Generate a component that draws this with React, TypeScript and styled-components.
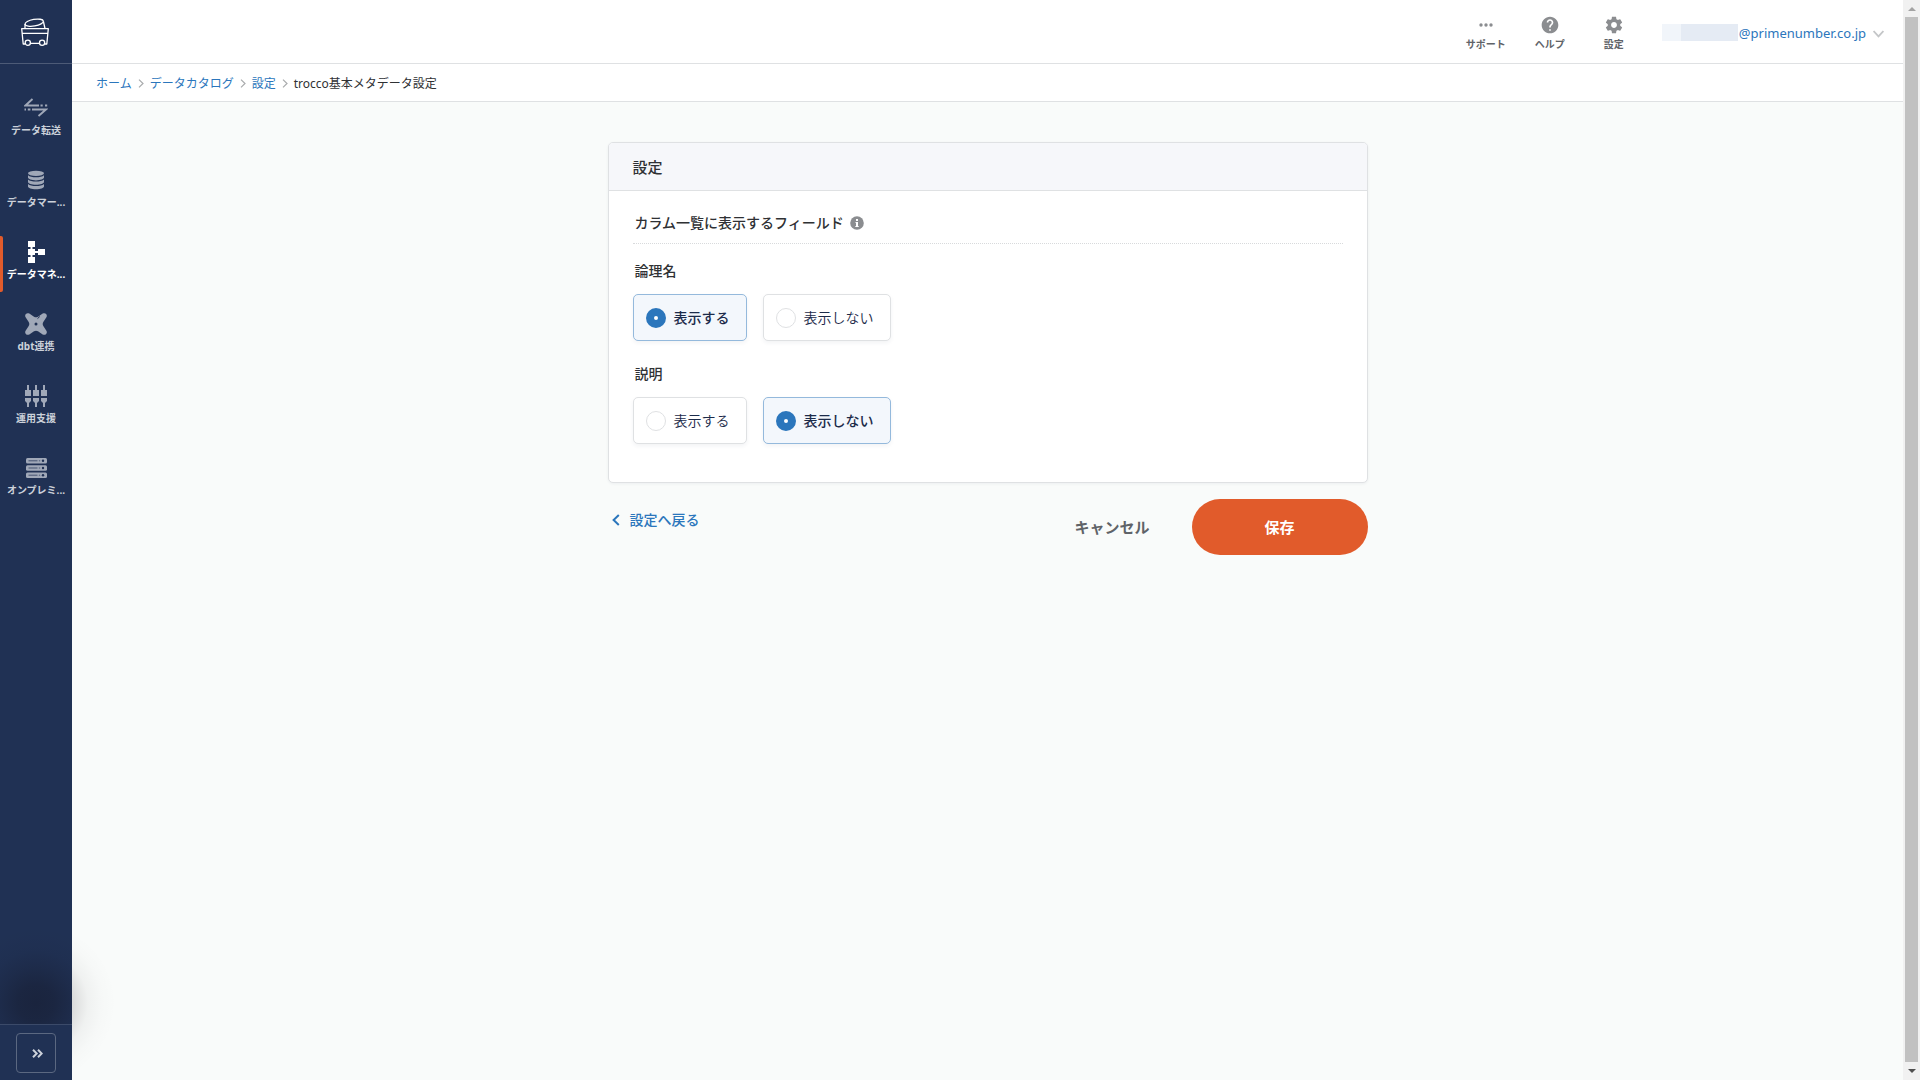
import React, { useState } from 'react';
import styled, { createGlobalStyle } from 'styled-components';

const color = {
  navy: '#203154',
  navyLine: '#4d5b77',
  blue: '#2b76bc',
  orange: '#e15b2b',
  text: '#2f3134',
  muted: '#5f6368',
  icon: '#8b8d90',
  line: '#dfe1e3',
  page: '#f9fbfa',
};

const GlobalStyle = createGlobalStyle`
  *, *::before, *::after { box-sizing: border-box; }
  html, body { margin: 0; }
  body {
    color: ${color.text};
    background: ${color.page};
    font-family: "Noto Sans", "Noto Sans CJK JP", sans-serif;
    font-size: 14px;
    line-height: 20px;
    overflow: hidden;
  }
  button, input { font: inherit; }
  a { text-decoration: none; }
`;

const Shell = styled.div`
  display: grid;
  grid-template-columns: 72px minmax(0, 1fr) 17px;
  height: 100vh;
`;

/* Sidebar */

const Sidebar = styled.aside`
  position: relative;
  display: flex;
  flex-direction: column;
  background: ${color.navy};
`;

const LogoLink = styled.a`
  display: flex;
  align-items: center;
  justify-content: center;
  height: 64px;
  padding-right: 2px;
  border-bottom: 1px solid ${color.navyLine};
`;

const Nav = styled.nav`
  flex: 1;
  display: flex;
  flex-direction: column;
  gap: 16px;
  padding-top: 28px;
`;

const NavItem = styled.a<{ $active?: boolean }>`
  position: relative;
  display: flex;
  flex-direction: column;
  align-items: center;
  height: 56px;
  padding-top: 4px;
  color: ${(p) => (p.$active ? '#fff' : '#a0a8b8')};

  &::before {
    content: '';
    display: ${(p) => (p.$active ? 'block' : 'none')};
    position: absolute;
    left: 0;
    top: 0;
    width: 3px;
    height: 100%;
    border-radius: 0 2px 2px 0;
    background: ${color.orange};
  }
`;

const NavIcon = styled.span`
  display: flex;
  align-items: center;
  justify-content: center;
  height: 24px;
`;

const NavLabel = styled.span<{ $active?: boolean }>`
  padding-top: 2px;
  font-size: 10px;
  line-height: 16px;
  font-weight: 700;
  white-space: nowrap;
  color: ${(p) => (p.$active ? '#fff' : '#ccd1da')};
`;

const Glow = styled.div`
  position: absolute;
  left: -44px;
  bottom: -3px;
  width: 160px;
  height: 160px;
  background: radial-gradient(
    circle closest-side,
    rgba(12, 6, 10, 0.3) 0,
    rgba(12, 6, 10, 0.26) 18px,
    rgba(12, 6, 10, 0.13) 36px,
    rgba(12, 6, 10, 0.04) 52px,
    rgba(12, 6, 10, 0.01) 66px,
    transparent 80px
  );
  pointer-events: none;
`;

const SidebarFooter = styled.div`
  position: relative;
  display: flex;
  justify-content: center;
  height: 56px;
  padding-top: 8px;
  border-top: 1px solid #3b4a69;
  background: ${color.navy};
`;

const ExpandButton = styled.button`
  display: flex;
  align-items: center;
  justify-content: center;
  width: 40px;
  height: 40px;
  padding: 0 0 0 3px;
  border: 1px solid #5b6881;
  border-radius: 4px;
  background: none;
  color: #ccd1da;
`;

/* Header */

const Main = styled.div`
  display: flex;
  flex-direction: column;
`;

const Header = styled.header`
  display: flex;
  align-items: center;
  justify-content: flex-end;
  height: 64px;
  padding: 2px 19px 0 0;
  border-bottom: 1px solid ${color.line};
  background: #fff;
`;

const HeaderLink = styled.a`
  display: flex;
  flex-direction: column;
  align-items: center;
  width: 64px;
  padding-top: 1px;
  font-size: 10px;
  line-height: 16px;
  font-weight: 600;
  color: ${color.muted};

  svg {
    height: 20px;
    margin-bottom: 1px;
    color: ${color.icon};
  }
`;

const AccountButton = styled.button`
  display: flex;
  align-items: center;
  margin-left: 16px;
  padding: 0;
  border: 0;
  background: none;
  color: ${color.blue};
  font-size: 13px;
  line-height: 20px;

  svg {
    margin: 3px 0 0 7px;
    color: #c4c6c8;
  }
`;

const Mask = styled.span`
  width: 76px;
  height: 17px;
  margin-right: 1px;
  background: linear-gradient(90deg, #f1f5fa 19px, #e5ebf4 19px);
`;

const Breadcrumb = styled.nav`
  display: flex;
  align-items: center;
  height: 38px;
  padding: 2px 24px 0;
  border-bottom: 1px solid ${color.line};
  background: #fff;
  font-size: 12px;
  line-height: 20px;

  a { color: ${color.blue}; }
  svg { margin: 0 6px; color: #a9abad; }
`;

/* Content */

const Content = styled.main`
  width: 100%;
  max-width: 760px;
  margin: 0 auto;
  padding-top: 40px;
`;

const Card = styled.section`
  border: 1px solid ${color.line};
  border-radius: 5px;
  background: #fff;
  box-shadow: 0 1px 3px rgba(30, 50, 80, 0.06);
`;

const CardTitle = styled.h1`
  display: flex;
  align-items: center;
  height: 48px;
  margin: 0;
  padding: 0 24px;
  border-bottom: 1px solid ${color.line};
  border-radius: 4px 4px 0 0;
  background: #f6f7fa;
  font-size: 15px;
  line-height: 24px;
  font-weight: 500;
`;

const CardBody = styled.div`
  padding: 20px 24px 38px;
`;

const SectionTitle = styled.h2`
  display: flex;
  align-items: center;
  gap: 6px;
  margin: 0 0 16px;
  padding: 0 2px 8px;
  border-bottom: 1px dotted #d8dadc;
  font-size: 14px;
  line-height: 24px;
  font-weight: 500;
  color: ${color.text};

  svg { color: ${color.icon}; }
`;

const Field = styled.fieldset`
  min-width: 0;
  margin: 0 0 22px;
  padding: 0;
  border: 0;
  &:last-child { margin-bottom: 0; }
`;

const FieldLabel = styled.legend`
  padding: 0 2px 12px;
  font-size: 14px;
  line-height: 22px;
  font-weight: 500;
`;

const Options = styled.div`
  display: flex;
  gap: 16px;
`;

const Option = styled.label<{ $checked: boolean }>`
  display: flex;
  align-items: center;
  gap: 8px;
  height: 47px;
  padding: 0 16px 0 12px;
  border: 1px solid ${(p) => (p.$checked ? '#94b9dc' : color.line)};
  border-radius: 5px;
  background: ${(p) => (p.$checked ? '#f3f7fc' : '#fff')};
  box-shadow: 0 2px 4px rgba(30, 50, 80, 0.06);
  color: #1c2b4a;
  font-weight: ${(p) => (p.$checked ? 500 : 350)};
`;

const Radio = styled.input`
  appearance: none;
  width: 20px;
  height: 20px;
  margin: 0;
  border: 1px solid ${color.line};
  border-radius: 50%;
  background: #fff;

  &:checked {
    border: 8px solid ${color.blue};
  }
`;

const Actions = styled.div`
  display: flex;
  align-items: flex-start;
  padding-top: 16px;
`;

const BackLink = styled.a`
  display: flex;
  align-items: center;
  gap: 10px;
  margin-right: auto;
  padding: 10px 4px;
  color: ${color.blue};
  font-weight: 500;
  line-height: 22px;
`;

const CancelButton = styled.button`
  height: 56px;
  padding: 0 42px;
  border: 0;
  background: none;
  color: ${color.muted};
  font-size: 15px;
  font-weight: 600;
`;

const SaveButton = styled.button`
  width: 176px;
  height: 56px;
  border: 0;
  border-radius: 28px;
  background: ${color.orange};
  color: #fff;
  font-size: 15px;
  font-weight: 700;
`;

/* Scrollbar */

const Scrollbar = styled.div`
  display: flex;
  flex-direction: column;
  align-items: center;
  background: #f1f1f1;
`;

const ScrollThumb = styled.div`
  flex: 1;
  width: 13px;
  background: #c1c1c1;
`;

const ScrollArrow = styled.div<{ $down?: boolean }>`
  display: flex;
  align-items: center;
  justify-content: center;
  height: ${(p) => (p.$down ? 18 : 17)}px;
  &::before {
    content: '';
    border: 4px solid transparent;
    border-top: ${(p) => (p.$down ? '4px solid #505050' : '0')};
    border-bottom: ${(p) => (p.$down ? '0' : '4px solid #a3a3a3')};
  }
`;

/* Icons */

const LogoIcon = () => (
  <svg width="28" height="28" viewBox="0 0 28 28" fill="none" stroke="#fff" strokeWidth="1.3" strokeLinejoin="round">
    <ellipse cx="13.2" cy="4.7" rx="9.3" ry="3.3" transform="rotate(-10 13.200 4.700)" />
    <path d="M4 6v4.500M22.400 3.500 24 10.500" />
    <path d="M4 26H2.200L.7 10.700h26.600L25.800 26h-1.800M1.200 15.300h25.600M9.500 25.300h8.800" />
    <circle cx="6.800" cy="24.700" r="2.600" />
    <circle cx="21.100" cy="24.700" r="2.600" />
  </svg>
);

const TransferIcon = () => (
  <svg width="24" height="20" viewBox="0 0 24 20" fill="none" stroke="currentColor" strokeWidth="1.900">
    <path d="M8.500 1 1.500 7.500H15M16.500 7.500h2.200M21 7.500h2.200M.5 11.500H2M3.800 11.500h2.600M8 11.500h14L14.500 18" />
  </svg>
);

const DatabaseIcon = () => (
  <svg width="16" height="20" viewBox="0 0 16 20" fill="currentColor">
    <ellipse cx="8" cy="3.300" rx="8" ry="2.600" />
    {[5.2, 9.6, 14].map((y) => (
      <path key={y} transform={`translate(0 ${y})`} d="M0 0c1.500 1.500 4.500 2 8 2s6.500-.5 8-2v2.400C16 4 12.500 5.200 8 5.200S0 4 0 2.400z" />
    ))}
  </svg>
);

const TreeIcon = () => (
  <svg width="17" height="22" viewBox="0 0 17 22" fill="currentColor">
    <path d="M0 0h7v6H4.500v2H7v2h3V8h7v6h-7v-2H7v2H4.500v2H7v6H0v-6h2.500v-2H0V8h2.500V6H0z" />
  </svg>
);

const DbtIcon = () => (
  <svg width="22" height="22" viewBox="0 0 22 22" fill="currentColor" fillRule="evenodd">
    <path d="M4.300.6 9 3.700q2 1.200 4 0L17.700.6C20.300-.9 22.900 1.700 21.400 4.300L18.300 9q-1.200 2 0 4l3.100 4.700c1.500 2.600-1.100 5.200-3.700 3.700L13 18.300q-2-1.200-4 0l-4.700 3.100C1.700 22.900-.9 20.300.6 17.700L3.700 13q1.200-2 0-4L.6 4.300C-.9 1.700 1.700-.9 4.300.6zM11 9.500a1.500 1.500 0 1 0 0 3 1.500 1.500 0 0 0 0-3z" />
    <path d="M12.500 5.600 14.800 3.500" stroke={color.navy} strokeWidth="1" />
  </svg>
);

const PlugsIcon = () => (
  <svg width="22" height="22" viewBox="0 0 22 22" fill="currentColor">
    {[0, 8, 16].map((x) => (
      <path key={x} transform={`translate(${x} 0)`} d="M2 0h2v5h2v6H0V5h2zM0 13h6v3l-2 2v4H2v-4l-2-2z" />
    ))}
  </svg>
);

const ServerIcon = () => (
  <svg width="21" height="20" viewBox="0 0 21 20">
    {[0, 7.2, 14.4].map((y) => (
      <g key={y} transform={`translate(0 ${y})`}>
        <rect width="21" height="5.600" rx="1.500" fill="currentColor" />
        <path d="M2.500 2.800h9" stroke={color.navy} strokeWidth="1" opacity=".7" />
        <circle cx="17" cy="2.800" r="1.200" fill={color.navy} />
        <circle cx="13.500" cy="2.800" r=".8" fill={color.navy} opacity=".5" />
      </g>
    ))}
  </svg>
);

const ExpandIcon = () => (
  <svg width="11" height="9" viewBox="0 0 11 9" fill="none" stroke="currentColor" strokeWidth="2">
    <path d="m1 .8 3.700 3.700L1 8.200M6 .8l3.700 3.700L6 8.200" />
  </svg>
);

const DotsIcon = () => (
  <svg width="14" height="20" viewBox="0 0 14 20" fill="currentColor">
    <circle cx="2" cy="10" r="1.700" />
    <circle cx="7" cy="10" r="1.700" />
    <circle cx="12" cy="10" r="1.700" />
  </svg>
);

const HelpIcon = () => (
  <svg width="20" height="20" viewBox="0 0 24 24" fill="currentColor">
    <path d="M12 2C6.480 2 2 6.480 2 12s4.480 10 10 10 10-4.480 10-10S17.520 2 12 2zm1 17h-2v-2h2v2zm2.070-7.750-.9.920C13.450 12.900 13 13.500 13 15h-2v-.5c0-1.100.45-2.100 1.170-2.830l1.240-1.260c.37-.36.590-.86.590-1.410 0-1.100-.9-2-2-2s-2 .9-2 2H8c0-2.210 1.790-4 4-4s4 1.790 4 4c0 .88-.36 1.680-.93 2.250z" />
  </svg>
);

const GearIcon = () => (
  <svg width="20" height="20" viewBox="0 0 24 24" fill="currentColor">
    <path d="M19.430 12.980c.04-.32.070-.64.070-.98s-.03-.66-.07-.98l2.110-1.650c.19-.15.240-.42.120-.64l-2-3.460c-.12-.22-.39-.3-.61-.22l-2.490 1c-.52-.4-1.080-.73-1.690-.98l-.38-2.650C14.460 2.180 14.250 2 14 2h-4c-.25 0-.46.180-.49.420l-.38 2.650c-.61.250-1.170.590-1.690.980l-2.490-1c-.23-.09-.49 0-.61.220l-2 3.460c-.13.220-.07.490.120.640l2.110 1.650c-.04.320-.07.650-.07.980s.030.660.070.980l-2.110 1.650c-.19.150-.24.420-.12.640l2 3.460c.12.220.390.300.610.220l2.490-1c.52.400 1.080.730 1.690.980l.38 2.650c.03.240.240.420.490.420h4c.25 0 .46-.18.490-.42l.38-2.650c.61-.25 1.170-.59 1.690-.98l2.490 1c.23.090.490 0 .610-.22l2-3.460c.12-.22.070-.49-.12-.64l-2.110-1.650zM12 15.500c-1.930 0-3.500-1.570-3.500-3.500s1.570-3.500 3.500-3.500 3.500 1.570 3.500 3.500-1.570 3.500-3.500 3.500z" />
  </svg>
);

const InfoIcon = () => (
  <svg width="14" height="14" viewBox="0 0 14 14">
    <circle cx="7" cy="7" r="6.800" fill="currentColor" />
    <path d="M6 3h2v2H6zM5.500 6H8v4h.7v1H5.300v-1H6V7h-.5z" fill="#fff" />
  </svg>
);

const ChevronDown = () => (
  <svg width="11" height="8" viewBox="0 0 11 8" fill="none" stroke="currentColor" strokeWidth="1.800">
    <path d="m.6 1 4.900 5.300L10.400 1" />
  </svg>
);

const Separator = () => (
  <svg width="6" height="9" viewBox="0 0 6 9" fill="none" stroke="currentColor" strokeWidth="1.200" aria-hidden="true">
    <path d="m1 .6 4 3.900-4 3.900" />
  </svg>
);

const BackIcon = () => (
  <svg width="8" height="12" viewBox="0 0 8 12" fill="none" stroke="currentColor" strokeWidth="2">
    <path d="M6.800 1 1.600 6l5.200 5" />
  </svg>
);

const navItems = [
  { label: 'データ転送', Icon: TransferIcon },
  { label: 'データマー...', Icon: DatabaseIcon },
  { label: 'データマネ...', Icon: TreeIcon, active: true },
  { label: 'dbt連携', Icon: DbtIcon },
  { label: '運用支援', Icon: PlugsIcon },
  { label: 'オンプレミ...', Icon: ServerIcon },
];

const headerItems = [
  { label: 'サポート', Icon: DotsIcon },
  { label: 'ヘルプ', Icon: HelpIcon },
  { label: '設定', Icon: GearIcon },
];

const crumbs = ['ホーム', 'データカタログ', '設定'];

function VisibilityField({ name, label, initial }: { name: string; label: string; initial: boolean }) {
  const [shown, setShown] = useState(initial);
  return (
    <Field>
      <FieldLabel>{label}</FieldLabel>
      <Options>
        <Option $checked={shown}>
          <Radio type="radio" name={name} checked={shown} onChange={() => setShown(true)} />
          表示する
        </Option>
        <Option $checked={!shown}>
          <Radio type="radio" name={name} checked={!shown} onChange={() => setShown(false)} />
          表示しない
        </Option>
      </Options>
    </Field>
  );
}

export default function App() {
  return (
    <>
      <GlobalStyle />
      <Shell>
        <Sidebar>
          <LogoLink href="#"><LogoIcon /></LogoLink>
          <Nav>
            {navItems.map(({ label, Icon, active }) => (
              <NavItem key={label} href="#" $active={active}>
                <NavIcon><Icon /></NavIcon>
                <NavLabel $active={active}>{label}</NavLabel>
              </NavItem>
            ))}
          </Nav>
          <Glow />
          <SidebarFooter>
            <ExpandButton type="button"><ExpandIcon /></ExpandButton>
          </SidebarFooter>
        </Sidebar>

        <Main>
          <Header>
            {headerItems.map(({ label, Icon }) => (
              <HeaderLink key={label} href="#">
                <Icon />
                {label}
              </HeaderLink>
            ))}
            <AccountButton type="button">
              <Mask />
              @primenumber.co.jp
              <ChevronDown />
            </AccountButton>
          </Header>
          <Breadcrumb>
            {crumbs.map((crumb) => (
              <React.Fragment key={crumb}>
                <a href="#">{crumb}</a>
                <Separator />
              </React.Fragment>
            ))}
            <span>trocco基本メタデータ設定</span>
          </Breadcrumb>

          <Content>
            <Card>
              <CardTitle>設定</CardTitle>
              <CardBody>
                <SectionTitle>
                  カラム一覧に表示するフィールド
                  <InfoIcon />
                </SectionTitle>
                <VisibilityField name="logical-name" label="論理名" initial={true} />
                <VisibilityField name="description" label="説明" initial={false} />
              </CardBody>
            </Card>
            <Actions>
              <BackLink href="#">
                <BackIcon />
                設定へ戻る
              </BackLink>
              <CancelButton type="button">キャンセル</CancelButton>
              <SaveButton type="submit">保存</SaveButton>
            </Actions>
          </Content>
        </Main>

        <Scrollbar>
          <ScrollArrow />
          <ScrollThumb />
          <ScrollArrow $down />
        </Scrollbar>
      </Shell>
    </>
  );
}
